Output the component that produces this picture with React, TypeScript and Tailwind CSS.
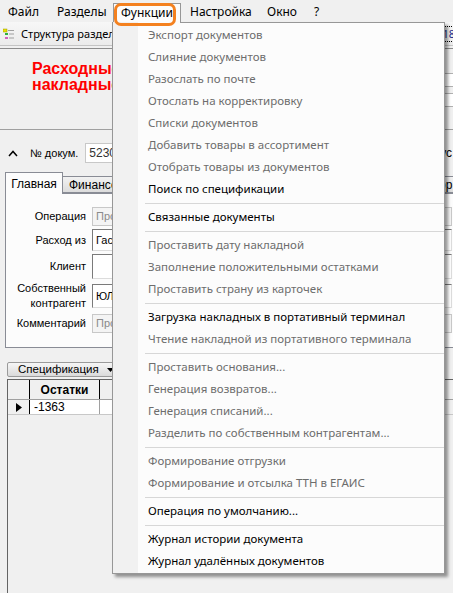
import React from 'react';

type Entry = { label: string; enabled?: boolean } | 'sep';

const functionsMenu: Entry[] = [
  { label: 'Экспорт документов' },
  { label: 'Слияние документов' },
  { label: 'Разослать по почте' },
  { label: 'Отослать на корректировку' },
  { label: 'Списки документов' },
  { label: 'Добавить товары в ассортимент' },
  { label: 'Отобрать товары из документов' },
  { label: 'Поиск по спецификации', enabled: true },
  'sep',
  { label: 'Связанные документы', enabled: true },
  'sep',
  { label: 'Проставить дату накладной' },
  { label: 'Заполнение положительными остатками' },
  { label: 'Проставить страну из карточек' },
  'sep',
  { label: 'Загрузка накладных в портативный терминал', enabled: true },
  { label: 'Чтение накладной из портативного терминала' },
  'sep',
  { label: 'Проставить основания...' },
  { label: 'Генерация возвратов...' },
  { label: 'Генерация списаний...' },
  { label: 'Разделить по собственным контрагентам...' },
  'sep',
  { label: 'Формирование отгрузки' },
  { label: 'Формирование и отсылка ТТН в ЕГАИС' },
  'sep',
  { label: 'Операция по умолчанию...', enabled: true },
  'sep',
  { label: 'Журнал истории документа', enabled: true },
  { label: 'Журнал удалённых документов', enabled: true },
];

function MenuBar() {
  return (
    <div className="flex h-[22px] items-stretch bg-[#f0f0f0] font-['Noto_Sans',sans-serif] text-[12px]">
      <div className="ml-[1px] flex w-[48px] items-center pl-[7px] pt-[2px]">Файл</div>
      <div className="flex w-[64px] items-center pl-[8px] pt-[2px]">Разделы</div>
      <div className="mt-[3px] flex w-[68px] items-center border border-b-0 border-[#979797] bg-[#fcfcfc] pl-[7px] pb-[1px]">
        Функции
      </div>
      <div className="flex w-[78px] items-center pl-[9px] pt-[2px]">Настройка</div>
      <div className="flex w-[47px] items-center pl-[8px] pt-[2px]">Окно</div>
      <div className="flex items-center pl-[8px] pt-[2px]">?</div>
    </div>
  );
}

function TreeIcon() {
  return (
    <svg width="12" height="12" viewBox="0 0 12 12">
      <rect x="0" y="1" width="4" height="3" fill="#e8e000" />
      <rect x="0" y="1" width="4" height="3" fill="none" stroke="#9a9a00" strokeWidth="0.5" />
      <rect x="5" y="2" width="6" height="1" fill="#a0a0a0" />
      <rect x="2" y="5" width="3" height="2" fill="#30b040" />
      <rect x="6" y="5.5" width="5" height="1" fill="#a0a0a0" />
      <rect x="2" y="9" width="3" height="2" fill="#d060c0" />
      <rect x="6" y="9.5" width="5" height="1" fill="#a0a0a0" />
    </svg>
  );
}

function Toolbar() {
  return (
    <div className="flex h-[24px] w-[460px] items-center justify-between border-b border-[#c4c4c4] bg-[linear-gradient(#f7f7f7,#ebebeb)] font-['Noto_Sans',sans-serif] text-[11px]">
      <div className="flex items-center gap-[6px] pl-[3px] pt-[1px]">
        <TreeIcon />
        <span>Структура разделов</span>
      </div>
      <div className="mr-[2px] border border-dotted border-black px-[2px] leading-[14px] text-[#1a2a8a]">
        № 52300018
      </div>
    </div>
  );
}

function TitlePanel() {
  return (
    <div className="mt-[2px] h-[82px] w-[460px] border-y border-t-[#8c8c8c] border-b-[#a0a0a0] pl-[32px] pt-[12px]">
      <div className="text-[16px] font-bold leading-[16px] text-[#ff0000]">
        Расходные
        <br />
        накладные
      </div>
      <div className="ml-[300px] -mt-[20px] flex flex-col gap-[6px]">
        <div className="h-[14px] w-[140px] border border-[#b0b0b0] bg-white" />
        <div className="h-[14px] w-[140px] border border-[#b0b0b0] bg-white" />
      </div>
    </div>
  );
}

function Field({ text, tone, h }: { text: string; tone: 'off' | 'on'; h: number }) {
  const box =
    tone === 'off'
      ? 'border-[#c8c8c8] bg-[#f4f4f4] text-[#8a8a8a]'
      : 'border-t-[#7a7a7a] border-l-[#7a7a7a] border-r-[#dcdcdc] border-b-[#dcdcdc] bg-white text-black';
  return (
    <div
      className={`flex w-[360px] items-center border pl-[3px] ${box}`}
      style={{ height: h }}
    >
      {text}
    </div>
  );
}

function DocForm() {
  return (
    <div className="w-[460px] text-[11px]">
      {/* number row */}
      <div className="mt-[13px] flex h-[20px] items-center">
        <svg width="10" height="7" viewBox="0 0 10 7" className="ml-[8px]">
          <polyline points="1,6 5,1.5 9,6" fill="none" stroke="#000" strokeWidth="1.5" />
        </svg>
        <span className="ml-[12px]">№ докум.</span>
        <div className="ml-[7px] flex h-[20px] w-[110px] items-center border border-[#c8c8c8] bg-white pl-[3px] text-[12px] text-[#333]">
          52300018
        </div>
        <span className="ml-auto mr-[8px] text-[12px]">Статус</span>
      </div>

      {/* tabs */}
      <div className="mt-[9px] flex h-[21px] items-end pl-[5px] text-[12px]">
        <div className="relative z-10 -mb-px flex h-[22px] w-[58px] items-center justify-center border border-b-0 border-[#898c95] bg-[#fcfcfc]">
          Главная
        </div>
        <div className="flex h-[17px] w-[90px] items-center border border-l-0 border-[#898c95] bg-[linear-gradient(#f2f2f2,#dcdcdc)] pl-[6px]">
          Финансовые
        </div>
        <div className="ml-auto flex h-[17px] w-[60px] items-center border border-[#898c95] bg-[linear-gradient(#f2f2f2,#dcdcdc)] pl-[6px]">
          Договор
        </div>
      </div>
      <div className="ml-[5px] h-[155px] border border-[#898c95] bg-[#fcfcfc] pt-[11px]">
        <div className="flex h-[22px] items-center">
          <span className="w-[81px] pr-[1px] text-right">Операция</span>
          <div className="ml-[5px]"><Field text="Продажа" tone="off" h={19} /></div>
        </div>
        <div className="flex h-[26px] items-center">
          <span className="w-[81px] pr-[1px] text-right">Расход из</span>
          <div className="ml-[5px]"><Field text="Гастроном" tone="on" h={22} /></div>
        </div>
        <div className="flex h-[27px] items-center">
          <span className="w-[81px] pr-[1px] text-right">Клиент</span>
          <div className="ml-[5px]"><Field text="" tone="on" h={25} /></div>
        </div>
        <div className="flex h-[32px] items-center">
          <span className="w-[81px] pr-[1px] text-right leading-[15px]">
            Собственный
            <br />
            контрагент
          </span>
          <div className="ml-[5px]"><Field text="ЮЛ" tone="on" h={24} /></div>
        </div>
        <div className="flex h-[23px] items-center">
          <span className="w-[81px] pr-[1px] text-right">Комментарий</span>
          <div className="ml-[5px]"><Field text="Прочее" tone="off" h={19} /></div>
        </div>
      </div>
    </div>
  );
}

function SpecGrid() {
  return (
    <div className="w-[460px]">
      <div className="ml-[7px] mt-[14px] flex h-[15px] w-[130px] items-center rounded-[2px] border border-[#9a9a9a] bg-[linear-gradient(#f6f6f6,#dadada)] pl-[10px] text-[11.5px] leading-none">
        Спецификация
        <svg width="7" height="4" viewBox="0 0 7 4" className="ml-[8px]">
          <polygon points="0,0 7,0 3.5,4" fill="#000" />
        </svg>
      </div>
      <div className="ml-[7px] mt-[2px] h-[220px] border-l border-t border-[#646464]">
        <div className="flex h-[20px] border-b border-[#a0a0a0] bg-[#f0f0f0] font-bold">
          <div className="w-[22px] border-r border-black" />
          <div className="flex w-[70px] items-center justify-center border-r border-black">Остатки</div>
          <div className="w-[130px] border-r border-black" />
          <div className="w-[100px] border-r border-black" />
          <div className="flex w-[110px] items-center justify-end pr-[6px]">Цена в грн</div>
        </div>
        <div className="flex h-[15px] border-b border-[#c8c8c8]">
          <div className="flex w-[22px] items-center justify-center border-r border-black bg-[#f0f0f0]">
            <svg width="6" height="9" viewBox="0 0 6 9">
              <polygon points="0,0 6,4.5 0,9" fill="#000" />
            </svg>
          </div>
          <div className="flex w-[70px] items-center border-r border-[#a0a0a0] bg-white pl-[4px]">-1363</div>
          <div className="w-[130px] border-r border-[#a0a0a0] bg-white" />
          <div className="w-[100px] border-r border-[#a0a0a0] bg-white" />
          <div className="w-[110px] bg-white" />
        </div>
      </div>
    </div>
  );
}

function FunctionsMenu() {
  return (
    <div className="absolute left-[112px] top-[22px] w-[333px] border-x border-b border-[#979797] bg-[linear-gradient(to_right,#f1f1f1_0,#f1f1f1_25px,#fcfcfc_25px)] py-[1px] font-['Noto_Sans',sans-serif] text-[11.5px] shadow-[3px_3px_3px_rgba(0,0,0,0.4)]">
      <div className="absolute left-[67px] right-0 top-0 h-px bg-[#979797]" />
      <div className="pt-[1px]">
        {functionsMenu.map((e, i) =>
          e === 'sep' ? (
            <div key={i} className="flex h-[6px] items-center pl-[32px]">
              <div className="h-px w-full bg-[#d7d7d7]" />
            </div>
          ) : (
            <div
              key={i}
              className={`flex h-[22px] items-center pl-[35px] whitespace-nowrap ${
                e.enabled ? 'text-black' : 'text-[#6d6d6d]'
              }`}
            >
              {e.label}
            </div>
          ),
        )}
      </div>
    </div>
  );
}

export default function App() {
  return (
    <div className="relative h-[593px] w-[453px] overflow-hidden bg-[#f0f0f0] font-['Liberation_Sans',Arial,sans-serif] text-[12px] text-black">
      <MenuBar />
      <Toolbar />
      <TitlePanel />
      <DocForm />
      <SpecGrid />
      <FunctionsMenu />
      {/* highlight ring round the open menu title */}
      <div className="absolute left-[114px] top-[3px] h-[23px] w-[62px] rounded-[7px] border-[3px] border-[#f4811f]" />
    </div>
  );
}
